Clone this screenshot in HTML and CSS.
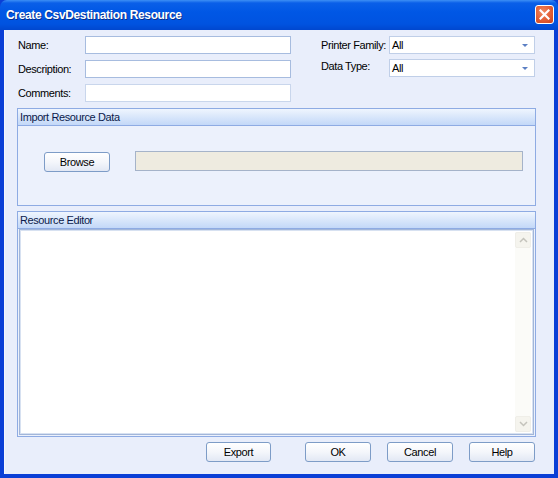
FILE: index.html
```html
<!DOCTYPE html>
<html>
<head>
<meta charset="utf-8">
<link rel="stylesheet" href="styles.css">
</head>
<body>
<div class="window">
  <div class="titlebar">
    <span class="title">Create CsvDestination Resource</span>
    <span class="close">
      <svg width="11" height="11" viewBox="0 0 11 11"><path d="M1.5 1.5 L9.5 9.5 M9.5 1.5 L1.5 9.5" stroke="#fff" stroke-width="2.2" stroke-linecap="square"/></svg>
    </span>
  </div>
  <div class="client">
    <div class="form">
      <div class="col-left">
        <div class="row"><label class="lbl lbl-left">Name:</label><div class="input"></div></div>
        <div class="row"><label class="lbl lbl-left">Description:</label><div class="input"></div></div>
        <div class="row"><label class="lbl lbl-left">Comments:</label><div class="input input-dim"></div></div>
      </div>
      <div class="col-right">
        <div class="row"><label class="lbl lbl-right">Printer Family:</label><div class="select"><span class="val">All</span><span class="arrow"></span></div></div>
        <div class="row row-tight"><label class="lbl lbl-right lbl-up">Data Type:</label><div class="select"><span class="val">All</span><span class="arrow"></span></div></div>
      </div>
    </div>

    <div class="group import">
      <div class="group-head">Import Resource Data</div>
      <div class="import-body">
        <div class="btn btn-browse">Browse</div>
        <div class="path-field"></div>
      </div>
    </div>

    <div class="group editor">
      <div class="group-head">Resource Editor</div>
      <div class="editor-box">
        <div class="editor-text"></div>
        <div class="scrollbar">
          <div class="sb-btn"><svg width="9" height="6" viewBox="0 0 9 6"><path d="M1 5 L4.5 1.5 L8 5" fill="none" stroke="#c4c3bc" stroke-width="1.5"/></svg></div>
          <div class="sb-track"></div>
          <div class="sb-btn"><svg width="9" height="6" viewBox="0 0 9 6"><path d="M1 1 L4.5 4.5 L8 1" fill="none" stroke="#c4c3bc" stroke-width="1.5"/></svg></div>
        </div>
      </div>
    </div>

    <div class="buttons">
      <div class="btn btn-export">Export</div>
      <div class="btn">OK</div>
      <div class="btn">Cancel</div>
      <div class="btn">Help</div>
    </div>
  </div>
</div>
</body>
</html>
```

FILE: styles.css
```css
html, body {
  margin: 0;
  padding: 0;
  background: #ffffff;
}

.window {
  width: 558px;
  height: 478px;
  box-sizing: border-box;
  display: flex;
  flex-direction: column;
  background: #0a3fd6;
  padding: 0 4px 4px 4px;
  font-family: "Liberation Sans", Arial, sans-serif;
  font-size: 11px;
  letter-spacing: -0.4px;
  color: #000;
}

.titlebar {
  height: 30px;
  margin: 0 -4px;
  display: flex;
  align-items: center;
  justify-content: space-between;
  padding: 0 4px 0 6px;
  background: linear-gradient(#3d8ff5 0px, #0a5fe8 3px, #0057e5 12px, #0053e0 24px, #0047cf 30px);
  border-radius: 7px 7px 0 0;
}

.title {
  color: #fff;
  font-weight: bold;
  font-size: 12px;
  letter-spacing: -0.35px;
  text-shadow: 1px 1px 0 #0a2f8a;
  margin-top: -1px;
}

.close {
  width: 19px;
  height: 19px;
  box-sizing: border-box;
  border: 1px solid #fff;
  border-radius: 3px;
  background: radial-gradient(circle at 40% 35%, #f08a62 0%, #e25d34 55%, #c9421d 100%);
  display: flex;
  align-items: center;
  justify-content: center;
  margin-top: -1px;
}

.client {
  flex: 1;
  background: #e9eefb;
  border-left: 1px solid #f4f6fd;
  display: flex;
  flex-direction: column;
  padding: 6px 18px 0 12px;
}

.form {
  display: flex;
  height: 66px;
}

.col-left {
  display: flex;
  flex-direction: column;
  gap: 6px;
  padding-left: 1px;
}

.col-right {
  display: flex;
  flex-direction: column;
  gap: 5px;
  margin-left: 30px;
}

.row {
  display: flex;
  align-items: center;
  height: 18px;
}

.lbl-left {
  width: 67px;
}

.lbl-right {
  width: 68px;
}

.lbl-up {
  align-self: flex-start;
  margin-top: 1px;
}

.input {
  width: 206px;
  height: 18px;
  box-sizing: border-box;
  background: #fff;
  border: 1px solid #a7bcdf;
}

.input-dim {
  border-color: #c9d6ec;
}

.select {
  width: 146px;
  height: 18px;
  box-sizing: border-box;
  background: #fff;
  border: 1px solid #c0cfe8;
  display: flex;
  align-items: center;
  justify-content: space-between;
  padding: 0 4px 0 2px;
}

.arrow {
  width: 0;
  height: 0;
  border-left: 3px solid transparent;
  border-right: 3px solid transparent;
  border-top: 3px solid #5b7fc3;
  margin-right: 2px;
}

.group {
  border: 1px solid #8eabe3;
  background: #ecf1fc;
  display: flex;
  flex-direction: column;
}

.import {
  height: 98px;
  box-sizing: border-box;
  margin-top: 6px;
}

.group-head {
  height: 16px;
  line-height: 16px;
  padding-left: 2px;
  background: linear-gradient(#eff5fe 0%, #dbe8fb 45%, #c3d8f8 100%);
  border-bottom: 1px solid #8eabe3;
  color: #0b1a4a;
}

.import-body {
  display: flex;
  align-items: flex-start;
  padding: 26px 0 0 26px;
  gap: 25px;
}

.btn {
  width: 66px;
  height: 20px;
  box-sizing: border-box;
  border: 1px solid #7d9cc7;
  border-radius: 3px;
  background: linear-gradient(#ffffff 0%, #f4f6fb 50%, #e2e8f4 100%);
  display: flex;
  align-items: center;
  justify-content: center;
}

.path-field {
  width: 388px;
  height: 20px;
  box-sizing: border-box;
  margin-top: -1px;
  background: #eeebe0;
  border: 1px solid #a5b3c9;
}

.editor {
  height: 226px;
  box-sizing: border-box;
  margin-top: 5px;
}

.editor-box {
  flex: 1;
  margin: 0 1px 1px 1px;
  border: 1px solid #a2b6d9;
  box-shadow: inset 0 0 0 1px #d7e1f1;
  background: #fff;
  display: flex;
  padding: 1px;
}

.editor-text {
  flex: 1;
}

.scrollbar {
  width: 16px;
  display: flex;
  flex-direction: column;
  margin: 1px 1px 1px 0;
  background: #fbfbf8;
}

.sb-btn {
  height: 16px;
  box-sizing: border-box;
  border: 1px solid #efeee8;
  border-radius: 2px;
  background: #f5f4ee;
  display: flex;
  align-items: center;
  justify-content: center;
}

.sb-track {
  flex: 1;
}

.buttons {
  display: flex;
  justify-content: flex-end;
  gap: 16px;
  margin-top: 5px;
  padding-right: 1px;
}

.btn-export {
  width: 65px;
  margin-right: 18px;
}
```
